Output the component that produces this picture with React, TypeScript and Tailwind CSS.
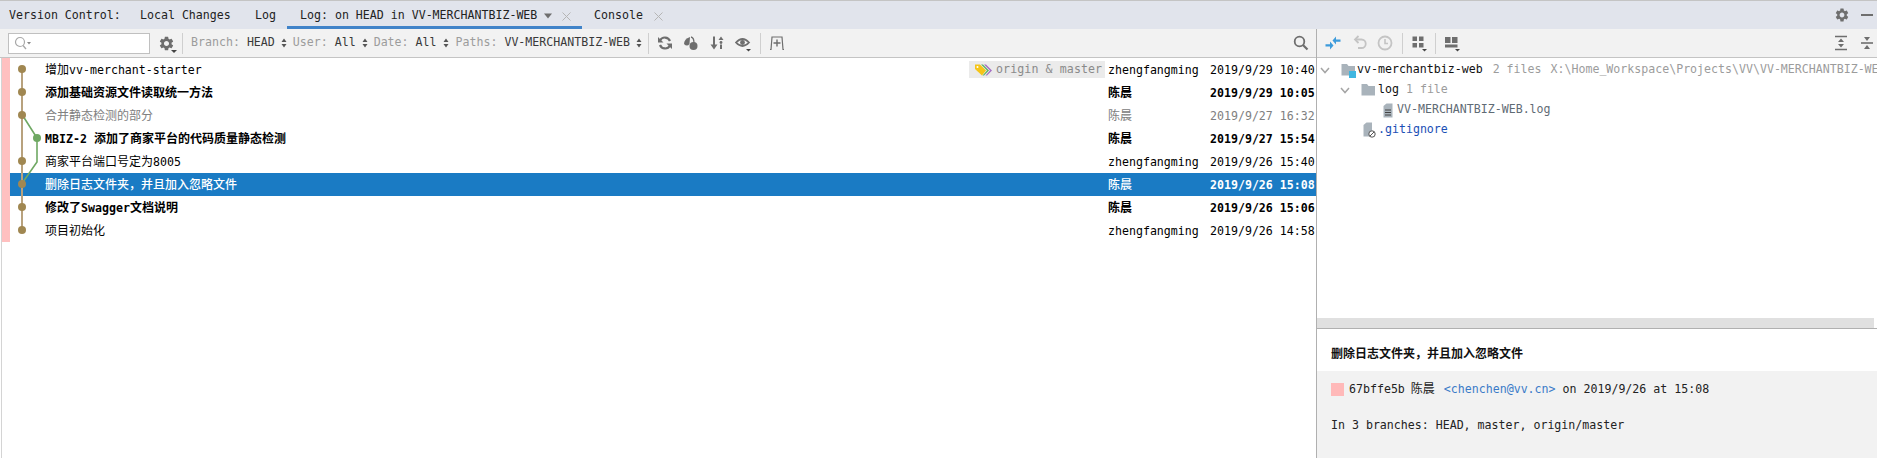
import { MdSettings } from 'react-icons/md';

const mono = "font-['DejaVu_Sans_Mono','Noto_Sans_CJK_SC',monospace]";

// 中文字比英文字大一點，拆開處理
function Txt({ text, cjk = '' }: { text: string; cjk?: string }) {
  const parts = text.split(/([\u4e00-\u9fff，]+)/);
  return (
    <>
      {parts.map((p, i) =>
        /[\u4e00-\u9fff，]/.test(p) ? (
          <span key={i} className={`text-[12px] ${cjk}`}>
            {p}
          </span>
        ) : (
          <span key={i}>{p}</span>
        )
      )}
    </>
  );
}

type Commit = {
  subject: string;
  author: string;
  date: string;
  kind: 'normal' | 'bold' | 'muted' | 'selected';
  refs?: boolean;
};

const commits: Commit[] = [
  { subject: '增加vv-merchant-starter', author: 'zhengfangming', date: '2019/9/29 10:40', kind: 'normal', refs: true },
  { subject: '添加基础资源文件读取统一方法', author: '陈晨', date: '2019/9/29 10:05', kind: 'bold' },
  { subject: '合并静态检测的部分', author: '陈晨', date: '2019/9/27 16:32', kind: 'muted' },
  { subject: 'MBIZ-2 添加了商家平台的代码质量静态检测', author: '陈晨', date: '2019/9/27 15:54', kind: 'bold' },
  { subject: '商家平台端口号定为8005', author: 'zhengfangming', date: '2019/9/26 15:40', kind: 'normal' },
  { subject: '删除日志文件夹，并且加入忽略文件', author: '陈晨', date: '2019/9/26 15:08', kind: 'selected' },
  { subject: '修改了Swagger文档说明', author: '陈晨', date: '2019/9/26 15:06', kind: 'bold' },
  { subject: '项目初始化', author: 'zhengfangming', date: '2019/9/26 14:58', kind: 'normal' },
];

const rowStyle = {
  normal: 'text-[#000000]',
  bold: 'text-[#000000] font-bold',
  muted: 'text-[#808080]',
  selected: 'bg-[#1a7bc4] text-white font-bold',
};

function Sep({ className }: { className: string }) {
  return <div className={`w-px h-[21px] bg-[#cfcfcf] flex-shrink-0 ${className}`} />;
}

function Updown() {
  return (
    <svg width="6" height="10" viewBox="0 0 6 10" className="flex-shrink-0">
      <path d="M3 0.5 L5.5 4 H0.5 Z M3 9.5 L0.5 6 H5.5 Z" fill="#555" />
    </svg>
  );
}

function Filter({ label, value, left, arrowGap }: { label: string; value: string; left: string; arrowGap: string }) {
  return (
    <div className={`flex items-center flex-shrink-0 ${left}`}>
      <span className="text-[#9c9c9c]">{label}</span>
      <span className="text-[#3a3a3a] ml-[7px]">{value}</span>
      <span className={arrowGap}>
        <Updown />
      </span>
    </div>
  );
}

function Drop() {
  return <path d="M11 14 H16 L13.5 16.5 Z" fill="#444" />;
}

function GraphOverlay() {
  const ys = [11, 34, 57, 80, 103, 126, 149, 172];
  return (
    <svg width="60" height="184" className="absolute left-0 top-0">
      <path d="M22 11 V172" stroke="#b8a27e" strokeWidth="2" fill="none" />
      <path d="M23 58 L37 80 V104 L23 124" stroke="#6fa863" strokeWidth="1.6" fill="none" />
      {ys.map((y) =>
        y === 80 ? null : <circle key={y} cx="22" cy={y} r="4" fill="#a08751" />
      )}
      <circle cx="37" cy="80" r="4" fill="#6fa863" />
    </svg>
  );
}

function RefTags() {
  return (
    <div className="w-[136px] h-[17px] bg-[#ebebeb] flex items-center flex-shrink-0 text-[#8a8a8a] pl-[5px]">
      <svg width="20" height="14" viewBox="0 0 20 14" className="flex-shrink-0">
        <path d="M10 1.5 H12 L18 7.5 L13 12.5 H11.5 L16 7.5 Z" fill="#a66fc4" />
        <path d="M7 1.5 H9 L15 7.5 L10 12.5 H8.5 L13 7.5 Z" fill="#62b368" />
        <path d="M1 1.5 H6 L12 7.5 L8 12.5 L1 6 Z" fill="#f5c518" />
        <circle cx="3.5" cy="4" r="1" fill="#fff" />
      </svg>
      <span className="ml-[2px] tracking-[0.1px]">origin & master</span>
    </div>
  );
}

function CommitRow({ c }: { c: Commit }) {
  const cjk = c.kind === 'selected' ? 'font-medium' : '';
  return (
    <div className={`h-[23px] flex items-center ${rowStyle[c.kind]}`}>
      <div className="flex-1 min-w-0 pl-[35px] pt-[2px] whitespace-nowrap">
        <Txt text={c.subject} cjk={cjk} />
      </div>
      {c.refs && <RefTags />}
      <div className="w-[102px] ml-[3px] pt-[2px] flex-shrink-0">
        <Txt text={c.author} cjk={cjk} />
      </div>
      <div className="w-[106px] pt-[2px] flex-shrink-0 whitespace-nowrap">{c.date}</div>
    </div>
  );
}

function LogToolbar() {
  return (
    <div className="h-[29px] bg-[#f2f2f2] border-b border-[#c4c4c4] flex items-center">
      <div className="ml-[8px] w-[142px] h-[21px] bg-white border border-[#c0c0c0] flex items-center pl-[5px] flex-shrink-0">
        <svg width="18" height="14" viewBox="0 0 18 14">
          <circle cx="6" cy="6" r="4.5" fill="none" stroke="#a8a8a8" strokeWidth="1.2" />
          <path d="M9 9.5 L12 13" stroke="#a8a8a8" strokeWidth="1.3" />
          <path d="M13 6 H17 L15 8.5 Z" fill="#888" />
        </svg>
      </div>
      <div className="relative ml-[8px] w-[16px] h-[16px] flex-shrink-0">
        <MdSettings size={17} color="#6e6e6e" />
        <svg width="6" height="4" className="absolute right-[-3px] bottom-[-3px]">
          <path d="M0 0 H6 L3 3 Z" fill="#444" />
        </svg>
      </div>
      <Sep className="ml-[8px]" />
      <Filter label="Branch:" value="HEAD" left="ml-[8px]" arrowGap="ml-[6px]" />
      <Filter label="User:" value="All" left="ml-[6px]" arrowGap="ml-[6px]" />
      <Filter label="Date:" value="All" left="ml-[6px]" arrowGap="ml-[6px]" />
      <Filter label="Paths:" value="VV-MERCHANTBIZ-WEB" left="ml-[7px]" arrowGap="ml-[6px]" />
      <Sep className="ml-[6px]" />
      <svg width="16" height="16" viewBox="0 0 16 16" className="ml-[8px] flex-shrink-0">
        <path d="M13 6 A5.5 5.5 0 0 0 3 5.5" fill="none" stroke="#6e6e6e" strokeWidth="2.2" />
        <path d="M3 10 A5.5 5.5 0 0 0 13 10.5" fill="none" stroke="#6e6e6e" strokeWidth="2.2" />
        <path d="M1 2 V7.5 H6.5 Z M15 14 V8.5 H9.5 Z" fill="#6e6e6e" />
      </svg>
      <svg width="16" height="16" viewBox="0 0 16 16" className="ml-[10px] flex-shrink-0">
        <circle cx="10.5" cy="11" r="4" fill="#6e6e6e" />
        <path d="M1 9 Q1 4 7 2 L6.5 9 Q4 12 1 9 Z" fill="#6e6e6e" />
        <path d="M8 2 Q11 2.5 11 8" fill="none" stroke="#6e6e6e" strokeWidth="1.3" />
      </svg>
      <svg width="16" height="16" viewBox="0 0 16 16" className="ml-[10px] flex-shrink-0">
        <path d="M5 1.5 V11" stroke="#6e6e6e" strokeWidth="2" />
        <path d="M1.5 9.5 H8.5 L5 14.5 Z" fill="#6e6e6e" />
        <path d="M12 1.5 L14.5 5 H9.5 Z" fill="#6e6e6e" />
        <circle cx="12" cy="7.5" r="1.4" fill="#6e6e6e" />
        <path d="M12 9.5 V14" stroke="#6e6e6e" strokeWidth="2" />
      </svg>
      <svg width="17" height="17" viewBox="0 0 17 17" className="ml-[10px] flex-shrink-0">
        <path d="M1 7.5 Q7.5 0.5 14 7.5 Q7.5 14.5 1 7.5 Z" fill="none" stroke="#6e6e6e" strokeWidth="1.8" />
        <circle cx="7.5" cy="7.5" r="2.4" fill="#6e6e6e" />
        <Drop />
      </svg>
      <Sep className="ml-[8px]" />
      <svg width="16" height="16" viewBox="0 0 16 16" className="ml-[8px] flex-shrink-0">
        <path d="M1 14.5 H2 L3 2 H13 L14 14.5 H15" fill="none" stroke="#6e6e6e" strokeWidth="1.2" />
        <path d="M8 4.5 V11.5 M4.5 8 H11.5" stroke="#6e6e6e" strokeWidth="1.4" />
      </svg>
      <div className="flex-1" />
      <svg width="16" height="16" viewBox="0 0 16 16" className="mr-[7px] flex-shrink-0">
        <circle cx="6.5" cy="6.5" r="4.8" fill="none" stroke="#6e6e6e" strokeWidth="1.8" />
        <path d="M10 10 L14.5 14.5" stroke="#6e6e6e" strokeWidth="2.2" />
      </svg>
    </div>
  );
}

function ChangesToolbar() {
  return (
    <div className="h-[29px] bg-[#f2f2f2] border-b border-[#c4c4c4] flex items-center">
      <svg width="16" height="16" viewBox="0 0 16 16" className="ml-[8px] flex-shrink-0">
        <path d="M7.5 5.5 L11 1.5 V4.5 H15.5 V6.8 H11 V9.5 Z" fill="#3d9bdb" />
        <path d="M8.5 10.5 L5 14.5 V11.5 H0.5 V9.2 H5 V6.5 Z" fill="#3d9bdb" />
      </svg>
      <svg width="16" height="16" viewBox="0 0 16 16" className="ml-[11px] flex-shrink-0">
        <path d="M4 4.5 H9.5 A4.2 4.2 0 0 1 9.5 13 H6" fill="none" stroke="#c4c4c4" strokeWidth="1.8" />
        <path d="M6.5 1 L3 4.5 L6.5 8" fill="none" stroke="#c4c4c4" strokeWidth="1.8" />
      </svg>
      <svg width="16" height="16" viewBox="0 0 16 16" className="ml-[9px] flex-shrink-0">
        <circle cx="8" cy="8" r="6.5" fill="none" stroke="#c4c4c4" strokeWidth="1.8" />
        <path d="M8 4 V8.5 H11" fill="none" stroke="#c4c4c4" strokeWidth="1.6" />
      </svg>
      <Sep className="ml-[9px]" />
      <svg width="17" height="17" viewBox="0 0 17 17" className="ml-[8px] flex-shrink-0">
        <path d="M1.5 1.5 H6 V6 H1.5 Z M8 1.5 H12.5 V6 H8 Z M1.5 8 H6 V12.5 H1.5 Z M8 8 H12.5 V12.5 H8 Z" fill="#6e6e6e" />
        <Drop />
      </svg>
      <Sep className="ml-[7px]" />
      <svg width="17" height="17" viewBox="0 0 17 17" className="ml-[8px] flex-shrink-0">
        <path d="M1 2 H6.5 V8 H1 Z M8 2 H13.5 V8 H8 Z M1 9.5 H13.5 V12.5 H1 Z" fill="#6e6e6e" />
        <Drop />
      </svg>
      <div className="flex-1" />
      <svg width="14" height="16" viewBox="0 0 14 16" className="flex-shrink-0">
        <path d="M1 1.5 H13 M1 14.5 H13" stroke="#6e6e6e" strokeWidth="1.6" />
        <path d="M7 3.5 L10 7 H4 Z M7 12.5 L4 9 H10 Z" fill="#6e6e6e" />
      </svg>
      <svg width="14" height="16" viewBox="0 0 14 16" className="ml-[12px] mr-[3px] flex-shrink-0">
        <path d="M1 8 H13" stroke="#6e6e6e" strokeWidth="1.6" />
        <path d="M7 6 L4 2 H10 Z M7 10 L10 14 H4 Z" fill="#6e6e6e" />
      </svg>
    </div>
  );
}

function Chevron() {
  return (
    <svg width="10" height="7" viewBox="0 0 10 7" className="flex-shrink-0">
      <path d="M1 1 L5 5.5 L9 1" fill="none" stroke="#a5a5a5" strokeWidth="1.5" />
    </svg>
  );
}

function FolderIcon({ badge }: { badge?: boolean }) {
  return (
    <svg width="15" height="15" viewBox="0 0 15 15" className="flex-shrink-0">
      <path d="M0.5 1 H6 L7.5 3 H14 V12.5 H0.5 Z" fill="#a9b3bb" />
      {badge && <rect x="8" y="8" width="7" height="7" fill="#40b6e0" />}
    </svg>
  );
}

function ChangesTree() {
  return (
    <div className="flex-1 min-h-0 bg-white pt-[2px] whitespace-nowrap overflow-hidden">
      <div className="h-[20px] flex items-center pl-[3px]">
        <Chevron />
        <span className="ml-[11px]">
          <FolderIcon badge />
        </span>
        <span className="ml-[1px] text-[#111111]">vv-merchantbiz-web</span>
        <span className="ml-[10px] text-[#9c9c9c]">2 files</span>
        <span className="ml-[9px] text-[#9c9c9c]">X:\Home_Workspace\Projects\VV\VV-MERCHANTBIZ-WEB</span>
      </div>
      <div className="h-[20px] flex items-center pl-[23px]">
        <Chevron />
        <span className="ml-[11px]">
          <FolderIcon />
        </span>
        <span className="ml-[2px] text-[#111111]">log</span>
        <span className="ml-[7px] text-[#9c9c9c]">1 file</span>
      </div>
      <div className="h-[20px] flex items-center pl-[66px]">
        <svg width="10" height="15" viewBox="0 0 10 15" className="flex-shrink-0">
          <path d="M0.5 3 L3.5 0.5 H9.5 V14.5 H0.5 Z" fill="#a9b3bb" />
          <path d="M2 7 H8 M2 9.5 H8 M2 12 H8" stroke="#444" strokeWidth="1" />
        </svg>
        <span className="ml-[4px] text-[#5f6b75]">VV-MERCHANTBIZ-WEB.log</span>
      </div>
      <div className="h-[20px] flex items-center pl-[46px]">
        <svg width="13" height="16" viewBox="0 0 13 16" className="flex-shrink-0">
          <path d="M0.5 3 L3.5 0.5 H9 V14.5 H0.5 Z" fill="#a9b3bb" />
          <circle cx="9" cy="12" r="3.2" fill="#fff" stroke="#555" strokeWidth="1" />
          <path d="M7 14 L11 10" stroke="#555" strokeWidth="1" />
        </svg>
        <span className="ml-[2px] text-[#1a4fb5]">.gitignore</span>
      </div>
    </div>
  );
}

function CommitDetails() {
  return (
    <>
      <div className="h-[10px] flex bg-white flex-shrink-0">
        <div className="w-[557px] bg-[#e0e0e0]" />
      </div>
      <div className="h-[43px] bg-white border-t border-[#b0b0b0] pl-[14px] pt-[8px] flex items-center flex-shrink-0 text-[#111111]">
        <Txt text="删除日志文件夹，并且加入忽略文件" cjk="font-bold" />
      </div>
      <div className="h-[87px] flex-shrink-0 bg-[#f2f2f2] pl-[14px] pt-[12px] text-[#222222]">
        <div className="flex items-center h-[13px]">
          <div className="w-[13px] h-[13px] bg-[#ffb9b9] flex-shrink-0" />
          <span className="ml-[5px]">67bffe5b</span>
          <span className="ml-[6px]">
            <Txt text="陈晨" />
          </span>
          <span className="ml-[9px] text-[#3a7bc8]">&lt;chenchen@vv.cn&gt;</span>
          <span className="ml-[7px]">on 2019/9/26 at 15:08</span>
        </div>
        <div className="mt-[23px] h-[13px] leading-[13px]">In 3 branches: HEAD, master, origin/master</div>
      </div>
    </>
  );
}

function TabClose({ left }: { left: string }) {
  return (
    <svg width="9" height="9" viewBox="0 0 9 9" className={`flex-shrink-0 ${left}`}>
      <path d="M0.5 0.5 L8.5 8.5 M8.5 0.5 L0.5 8.5" stroke="#b5b5b5" strokeWidth="1" />
    </svg>
  );
}

export default function App() {
  return (
    <div className={`w-[1877px] h-[458px] overflow-hidden bg-white flex flex-col text-[11.6px] ${mono}`}>
      {/* 頂部分頁列 */}
      <div className="h-[29px] flex-shrink-0 bg-[#e1e4ec] border-t border-[#c4c4c4] flex items-stretch text-[#222222]">
        <div className="w-[140px] pl-[9px] pt-[2px] flex items-center flex-shrink-0">Version Control:</div>
        <div className="w-[115px] pt-[2px] flex items-center flex-shrink-0">Local Changes</div>
        <div className="w-[32px] pt-[2px] flex items-center flex-shrink-0">Log</div>
        <div className="w-[295px] pl-[13px] flex items-center flex-shrink-0 border-b-[3px] border-[#4083c9] pt-[5px]">
          <span>Log: on HEAD in VV-MERCHANTBIZ-WEB</span>
          <svg width="8" height="6" className="ml-[7px] flex-shrink-0">
            <path d="M0 0.5 H8 L4 5.5 Z" fill="#6e6e6e" />
          </svg>
          <TabClose left="ml-[10px]" />
        </div>
        <div className="pl-[12px] pt-[2px] flex items-center flex-shrink-0">
          <span>Console</span>
          <TabClose left="ml-[11px]" />
        </div>
        <div className="flex-1" />
        <div className="flex items-center flex-shrink-0 pr-[4px]">
          <MdSettings size={16} color="#6e6e6e" />
          <div className="ml-[11px] w-[12px] h-[2px] bg-[#6e6e6e]" />
        </div>
      </div>

      <div className="flex-1 min-h-0 flex">
        {/* 左：提交記錄 */}
        <div className="w-[1317px] flex-shrink-0 flex flex-col border-r border-[#b0b0b0] relative">
          <LogToolbar />
          <div className="flex-1 min-h-0 ml-px border-l border-[#d4d4d4]">
            <div className="flex">
              <div className="w-[8px] bg-[#ffc0c0] flex-shrink-0" />
              <div className="flex-1 min-w-0">
                {commits.map((c) => (
                  <CommitRow key={c.date} c={c} />
                ))}
              </div>
            </div>
          </div>
          <div className="absolute left-0 top-[29px]">
            <GraphOverlay />
          </div>
        </div>

        {/* 右：變更與詳情 */}
        <div className="flex-1 min-w-0 flex flex-col">
          <ChangesToolbar />
          <ChangesTree />
          <CommitDetails />
        </div>
      </div>
    </div>
  );
}
